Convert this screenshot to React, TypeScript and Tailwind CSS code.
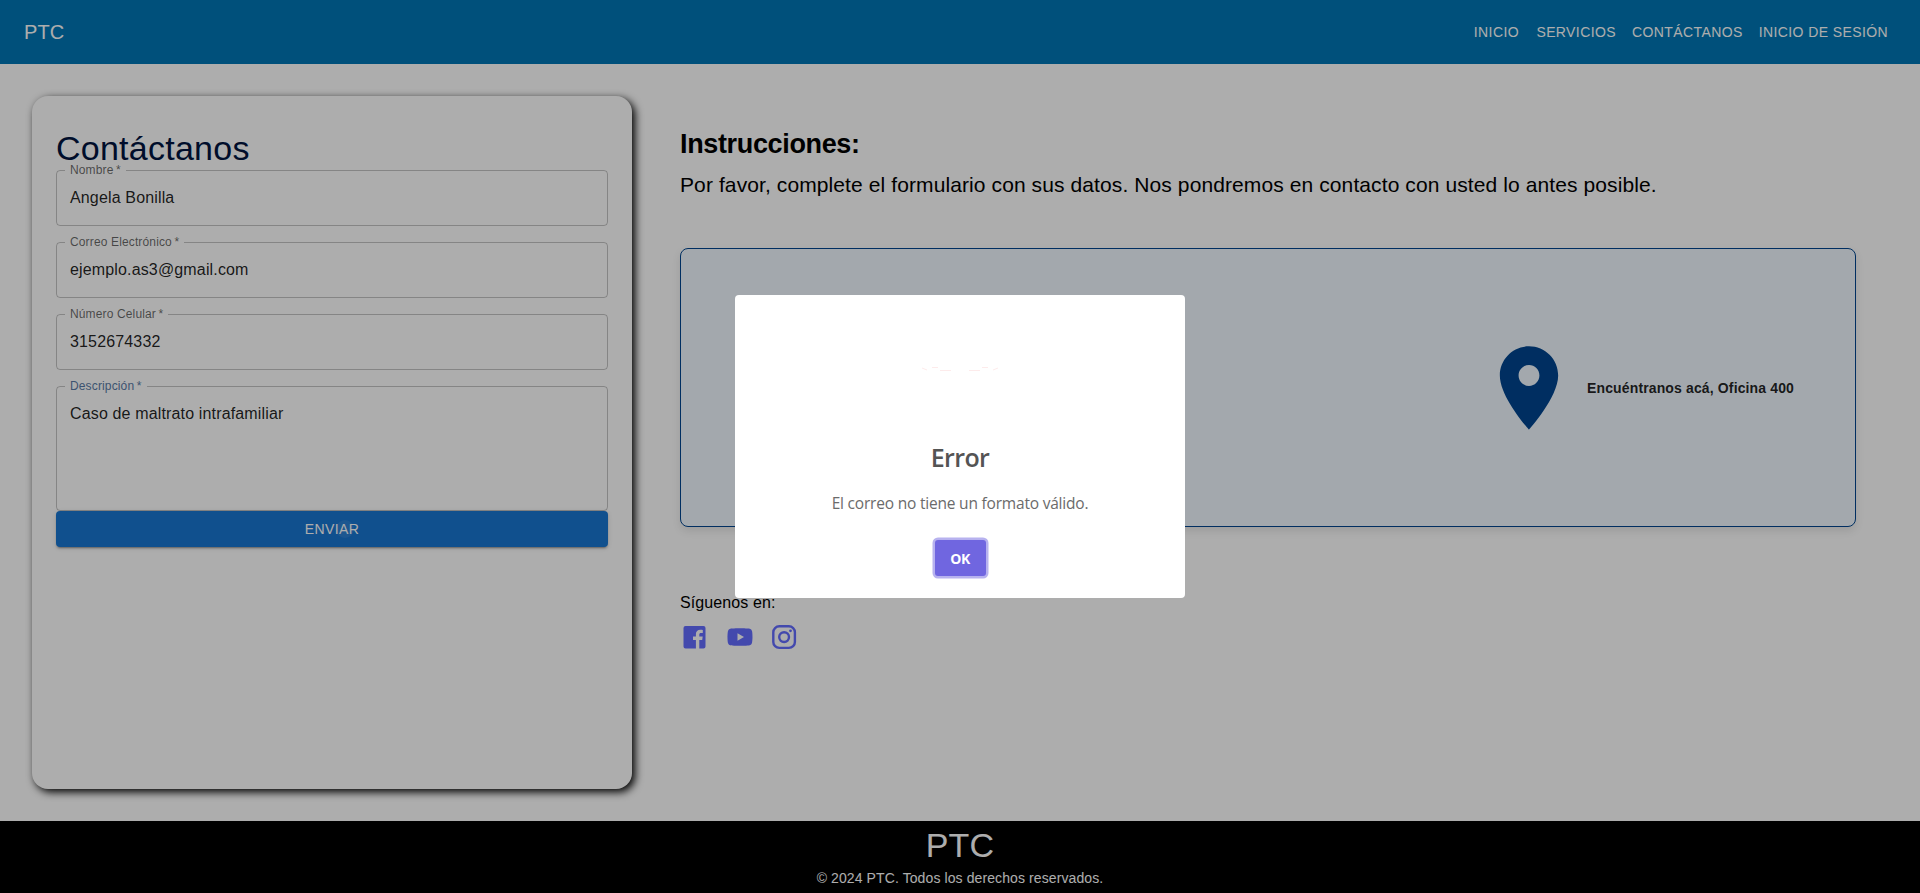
import type { ReactNode } from "react";
import { BiLogoYoutube } from "react-icons/bi";

const navItems = ["INICIO", "SERVICIOS", "CONTÁCTANOS", "INICIO DE SESIÓN"];

function Field({ label, value, tall = false, active = false }: { label: string; value: string; tall?: boolean; active?: boolean }) {
  return (
    <fieldset
      className={`-mt-2 min-w-0 rounded-[4px] border border-black/23 px-2 ${tall ? "h-[133px]" : "h-16"}`}
    >
      <legend
        className={`h-4 px-[5px] text-[12px] leading-4 tracking-[0.14px] ${active ? "text-[#5a7ba6]" : "text-black/60"}`}
      >
        {label}&#8201;*
      </legend>
      <div className="px-[5px] pt-2 text-[16px] leading-[23px] tracking-[0.15px] text-black/87">{value}</div>
    </fieldset>
  );
}

function Social({ children }: { children: ReactNode }) {
  return <a className="block size-[30px] text-[#646cff]">{children}</a>;
}

function FacebookIcon() {
  return (
    <svg className="size-[30px]" viewBox="0 0 30 30" fill="currentColor">
      <path d="M5.500 4H23.500A2 2 0 0 1 25.500 6V24.500A2 2 0 0 1 23.500 26.500H19.300V18H22.200L22.700 14.600H19.300V12.500C19.300 11.500 19.700 10.900 21.100 10.900H22.800V7.900C22.300 7.800 21.300 7.700 20.300 7.700C17.600 7.700 15.900 9.300 15.900 12.100V14.600H13V18H15.900V26.500H5.500A2 2 0 0 1 3.500 24.500V6A2 2 0 0 1 5.500 4Z" />
    </svg>
  );
}

function InstagramIcon() {
  return (
    <svg className="size-[30px]" viewBox="0 0 30 30" fill="none" stroke="currentColor" strokeWidth="2.400">
      <rect x="3.300" y="4.300" width="21.600" height="21.600" rx="6" />
      <circle cx="14.100" cy="15.100" r="4.900" />
      <circle cx="20.500" cy="8.800" r="1.400" fill="currentColor" stroke="none" />
    </svg>
  );
}

export default function App() {
  return (
    <div className="relative flex h-[893px] w-full flex-col overflow-hidden bg-white font-['Liberation_Sans',Arial,sans-serif]">
      <header className="flex h-16 shrink-0 items-center justify-between bg-[#0077b5] px-6 text-white">
        <div className="text-[20px] leading-8 tracking-[0.15px]">PTC</div>
        <nav className="flex">
          {navItems.map((item) => (
            <a key={item} className="min-w-16 px-2 text-center text-[14px] leading-[24.5px] tracking-[0.4px]">
              {item}
            </a>
          ))}
        </nav>
      </header>

      <main className="flex h-[757px] shrink-0 gap-12 px-8 pt-8">
        <section className="h-[693px] w-[600px] shrink-0 rounded-[16px] bg-white px-6 pt-[31px] shadow-[3px_3px_8px_#000]">
          <h1 className="mb-px h-[42px] text-[34px] leading-[42px] tracking-[0.25px] text-[#001440]">Contáctanos</h1>
          <div className="flex flex-col gap-4">
            <Field label="Nombre" value="Angela Bonilla" />
            <Field label="Correo Electrónico" value="ejemplo.as3@gmail.com" />
            <Field label="Número Celular" value="3152674332" />
            <Field label="Descripción" value="Caso de maltrato intrafamiliar" tall active />
          </div>
          <button className="relative h-9 w-full rounded-[4px] bg-[#1976d2] text-[14px] font-medium leading-9 tracking-[0.4px] text-white shadow-[0_3px_1px_-2px_rgba(0,0,0,0.2),0_2px_2px_0_rgba(0,0,0,0.14),0_1px_5px_0_rgba(0,0,0,0.12)]">
            ENVIAR
            <span className="absolute left-[280px] top-[9px] size-[18px] rounded-full bg-white/8" />
          </button>
        </section>

        <section className="w-[1176px] pt-7">
          <h2 className="text-[27px] font-bold leading-10 tracking-[-0.35px]">Instrucciones:</h2>
          <p className="pt-[7px] text-[21px] leading-7 tracking-[0.1px]">
            Por favor, complete el formulario con sus datos. Nos pondremos en contacto con usted lo antes posible.
          </p>
          <div className="mt-[49px] flex h-[279px] items-center justify-end rounded-[8px] border border-[#00458f] bg-[#f0f8ff] pr-[61px] shadow-[0_4px_8px_rgba(0,0,0,0.1)]">
            <svg className="size-[100px] text-[#00458f]" viewBox="0 0 24 24" fill="currentColor">
              <path d="M12 2C8.13 2 5 5.13 5 9c0 5.25 7 13 7 13s7-7.75 7-13c0-3.87-3.13-7-7-7m0 9.500c-1.380 0-2.500-1.120-2.500-2.500s1.120-2.500 2.500-2.500 2.500 1.120 2.500 2.500-1.120 2.500-2.500 2.500" />
            </svg>
            <p className="pl-2 text-[14px] font-bold leading-5 tracking-[0.135px] text-black/87">Encuéntranos acá, Oficina 400</p>
          </div>
          <p className="mt-[64px] text-[16px] leading-6 tracking-[0.1px]">Síguenos en:</p>
          <div className="mt-[7px] flex gap-[15px]">
            <Social><FacebookIcon /></Social>
            <Social><BiLogoYoutube className="-ml-[0.5px]" size={30} /></Social>
            <Social><InstagramIcon /></Social>
          </div>
        </section>
      </main>

      <footer className="flex h-[72px] shrink-0 flex-col items-center bg-black pt-[3px] text-white">
        <div className="text-[34px] leading-[42px] tracking-[0.25px]">PTC</div>
        <p className="pt-0.5 text-[14px] leading-5 tracking-[0.1px]">© 2024 PTC. Todos los derechos reservados.</p>
      </footer>

      <div className="absolute inset-0 flex items-center justify-center bg-black/32">
        <div
          role="dialog"
          className="flex h-[303px] w-[450px] flex-col items-center rounded-[4px] bg-white pt-[63px] font-['Open_Sans','Noto_Sans',sans-serif]"
        >
          <svg className="h-[20px] w-[80px]" viewBox="0 0 80 20" fill="none" stroke="#f27474" strokeOpacity="0.14">
            <path d="M2 10l5 2M12 9.500h6M20 12.500h11M49 12.500h11M62 9.500h6M78 10l-5 2" />
          </svg>
          <h2 className="mt-[61px] text-[25px] font-semibold leading-9 tracking-[-0.6px] text-[#545454]">Error</h2>
          <p className="mt-[16px] text-[15.500px] leading-6 tracking-[-0.2px] text-[#6b6b6b]">El correo no tiene un formato válido.</p>
          <button className="mt-[25px] h-9 w-[51px] rounded-[3px] bg-[#7066e0] text-[14px] font-bold leading-[37px] tracking-[-0.5px] text-white shadow-[0_0_0_2.5px_rgba(112,102,224,0.5)]">
            OK
          </button>
        </div>
      </div>
    </div>
  );
}
